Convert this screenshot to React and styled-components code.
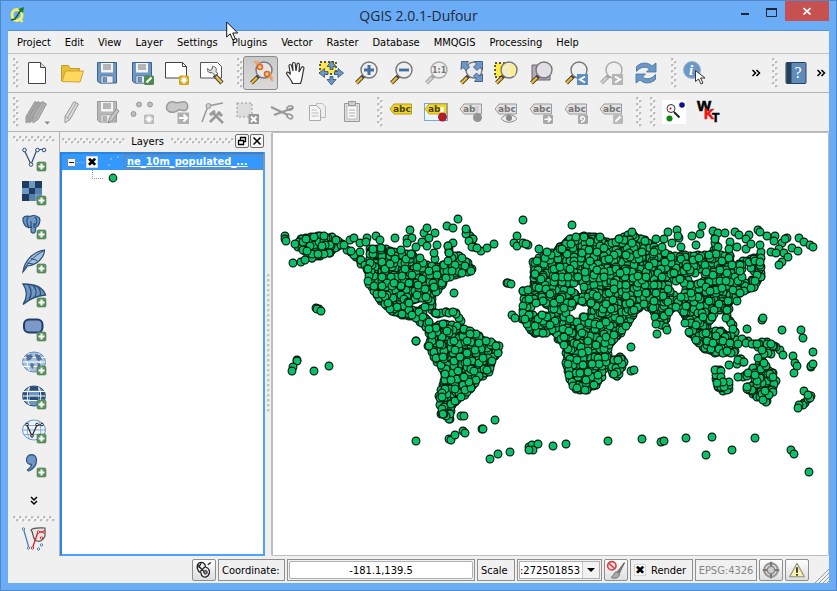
import React from "react";
import styled, { createGlobalStyle, css } from "styled-components";

const ui = '"DejaVu Sans Condensed", "DejaVu Sans", sans-serif';

const GlobalStyle = createGlobalStyle`
  * { box-sizing: border-box; }
  body { margin: 0; background: #6bacf7; font-family: ${ui}; font-size: 11px; color: #000; }
  button, input, select { font: inherit; color: inherit; }
`;

const Window = styled.div`
  display: flex;
  flex-direction: column;
  height: 100vh;
  min-height: 560px;
  padding: 0 7px 7px;
  background: #6bacf7;
  border: 1px solid #4f88c4;
  position: relative;
`;

const TitleBar = styled.header`
  display: grid;
  grid-template-columns: 98px 1fr 98px;
  align-items: start;
  height: 29px;
`;
const AppIcon = styled.span`
  padding: 5px 0 0 2px;
  line-height: 0;
`;
const Title = styled.h1`
  margin: 0;
  text-align: center;
  font: 400 14px/29px "Open Sans", "Noto Sans", sans-serif;
  color: #222a33;
`;
const Controls = styled.div`
  display: flex;
`;
const Control = styled.button`
  width: ${(p) => (p.$close ? 44 : 27)}px;
  height: ${(p) => (p.$close ? 20 : 22)}px;
  padding: 0;
  border: 0;
  display: grid;
  place-items: center;
  background: ${(p) => (p.$close ? "#c75050" : "transparent")};
`;

const Client = styled.div`
  flex: 1;
  min-height: 0;
  display: flex;
  flex-direction: column;
  background: #f0f0f0;
  border-top: 1px solid #5990d0;
`;
const MenuBar = styled.nav`
  display: flex;
  align-items: center;
  gap: 14px;
  height: 23px;
  padding: 2px 9px 0;
  border-bottom: 1px solid #c4c4c4;
`;
const MenuItem = styled.button`
  padding: 0;
  border: 0;
  background: none;
  line-height: 16px;
  white-space: nowrap;
`;

const ToolBar = styled.div`
  display: flex;
  align-items: center;
  height: 39px;
  padding-left: 5px;
  border-bottom: 1px solid #b4b4b4;
`;
const dots = css`
  background-image:
    radial-gradient(circle at 1px 1px, #bdbdbd 1px, transparent 2px),
    radial-gradient(circle at 1px 1px, #bdbdbd 1px, transparent 2px),
    radial-gradient(circle at 2px 2px, #ffffff 1px, transparent 2px),
    radial-gradient(circle at 2px 2px, #ffffff 1px, transparent 2px);
  background-size: 6px 6px;
  background-position: 0 0, 3px 3px, 0 0, 3px 3px;
`;
const Grip = styled.span`
  flex: none;
  width: 6px;
  height: 30px;
  margin-left: ${(p) => (p.$first ? 0 : 8)}px;
  ${dots}
`;
const FlatGrip = styled.span`
  ${dots}
  height: 6px;
  width: ${(p) => (p.$fill ? "auto" : "42px")};
  flex: ${(p) => (p.$fill ? 1 : "none")};
`;
const Tool = styled.button`
  flex: none;
  width: 35px;
  height: 34px;
  padding: 0;
  border: 1px solid ${(p) => (p.$active ? "#8b8b8b" : "transparent")};
  border-radius: 3px;
  background: ${(p) => (p.$active ? "linear-gradient(#c9c9c9, #dadada)" : "none")};
  display: grid;
  place-items: center;
`;
const More = styled.button`
  width: 16px;
  height: 30px;
  padding: 0;
  border: 0;
  background: none;
  display: grid;
  place-items: center;
  margin-left: ${(p) => (p.$push ? "auto" : 0)};
`;

const Workspace = styled.main`
  flex: 1;
  min-height: 0;
  display: grid;
  grid-template-columns: 52px 205px 6px 1fr;
`;
const SideBar = styled.div`
  display: flex;
  flex-direction: column;
  align-items: center;
  padding-top: 4px;
  border-right: 1px solid #b4b4b4;
  overflow: hidden;
  & > ${More} { margin: 4px 0 0; }
`;
const Dock = styled.section`
  display: flex;
  flex-direction: column;
  min-width: 0;
`;
const DockTitle = styled.div`
  display: flex;
  align-items: center;
  height: 20px;
  gap: 1px;
  padding: 0 1px 2px 2px;
`;
const DockName = styled.h2`
  margin: 0 6px 0 5px;
  font: inherit;
`;
const DockButton = styled.button`
  width: 14px;
  height: 14px;
  padding: 0;
  border: 1px solid #6c6c6c;
  border-radius: 2px;
  background: #f6f6f6;
  display: grid;
  place-items: center;
`;
const Tree = styled.div`
  flex: 1;
  background: #fff;
  border: 2px solid #4ba3fb;
  border-left-color: #2b84e2;
  border-top-color: #2b84e2;
`;
const LayerRow = styled.div`
  display: flex;
  align-items: center;
  height: 16px;
  padding-left: 5px;
  background: #3399ff;
`;
const Expander = styled.button`
  width: 9px;
  height: 9px;
  padding: 0;
  border: 1px solid #6b88a8;
  border-radius: 1px;
  background: #f5f5f5;
  display: grid;
  place-items: center;
  &::after { content: ""; width: 5px; height: 1px; background: #223; }
`;
const Branch = styled.span`
  width: 8px;
  margin-right: 2px;
  border-top: 1px dotted #8fb4dc;
`;
const Check = styled.input`
  appearance: none;
  flex: none;
  width: 12px;
  height: 12px;
  margin: 0;
  background: #fff;
  border: 1px solid #d8d8d8;
  display: grid;
  place-items: center;
  &:checked::after { content: "✖"; font: 12px/10px "DejaVu Sans", sans-serif; color: #000; }
`;
const LayerName = styled.label`
  flex: 1;
  padding-left: 2px;
  border: 1px dotted #c96a1a;
  font-weight: 700;
  line-height: 14px;
  text-decoration: underline;
  color: #fff;
  white-space: nowrap;
`;
const SymbolRow = styled.div`
  display: flex;
  height: 18px;
  padding-left: 30px;
`;
const Elbow = styled.span`
  width: 11px;
  height: 9px;
  margin-right: 5px;
  border-left: 1px dotted #999;
  border-bottom: 1px dotted #999;
`;
const Splitter = styled.div`
  display: grid;
  place-items: center;
  &::after {
    content: "";
    width: 3px;
    height: 140px;
    background: radial-gradient(circle at 1px 1px, #c2c2c2 1px, transparent 2px) 0 0 / 5px 5px;
  }
`;
const MapCanvas = styled.div`
  background: #fff;
  border: 2px solid #bdbdbd;
  border-width: 1px 1px 1px 2px;
  border-radius: 2px;
  min-width: 0;
  min-height: 0;
  svg { display: block; width: 100%; height: 100%; }
`;

const StatusBar = styled.footer`
  display: flex;
  justify-content: flex-end;
  align-items: center;
  gap: 2px;
  height: 27px;
  padding: 1px 0 0;
`;
const Cell = styled.div`
  display: flex;
  align-items: center;
  flex: none;
  width: ${(p) => p.$w}px;
  height: 22px;
  padding: 0 ${(p) => (p.$flush ? 1 : 3)}px;
  gap: 5px;
  border: 1px solid #8f8f8f;
  white-space: nowrap;
`;
const IconCell = styled.button`
  width: 24px;
  height: 22px;
  padding: 0;
  background: linear-gradient(#fdfdfd, #dedede);
  border: 1px solid #8f8f8f;
  border-radius: 2px;
  display: grid;
  place-items: center;
`;
const CoordInput = styled.input`
  width: 100%;
  height: 18px;
  padding: 0;
  border: 1px solid #b0b0b0;
  border-radius: 2px;
  background: #fff;
  text-align: center;
`;
const ScaleWrap = styled.div`
  display: grid;
  grid-template-columns: 1fr 17px;
  align-items: center;
  width: 100%;
  height: 18px;
  background: #fff;
  border: 1px solid #b0b0b0;
`;
const ScaleSelect = styled.select`
  grid-area: 1 / 1 / 2 / 3;
  appearance: none;
  width: 100%;
  height: 16px;
  padding: 0;
  border: 0;
  background: none;
`;
const ScaleArrow = styled.span`
  grid-area: 1 / 2;
  height: 16px;
  display: grid;
  place-items: center;
  background: #f2f2f2;
  border-left: 1px solid #c8c8c8;
  pointer-events: none;
`;
const Crs = styled.button`
  width: 62px;
  height: 22px;
  padding: 0;
  border: 1px solid #8f8f8f;
  background: none;
  color: #858585;
`;
const SizeGrip = styled.span`
  align-self: end;
  margin-left: 3px;
  line-height: 0;
`;
const Pointer = styled.span`
  position: absolute;
  left: 225px;
  top: 20px;
  line-height: 0;
  pointer-events: none;
`;

/* ---------- icons ---------- */
const Icon = ({ s = 24, children }) => (
  <svg width={s} height={s} viewBox="0 0 24 24" fill="none" overflow="visible" aria-hidden="true">{children}</svg>
);
const B = "#6d97c4";
const D = "#2c4e74";

const Floppy = ({ c = B, e = "#3d628c" }) => (
  <>
    <path d="M2.500 1.500h19v20.500h-17l-2-2z" fill={c} stroke={e} />
    <path d="M6 2h12v9.500H6z" fill="#f4f4f4" />
    <path d="M8 4h8M8 6h8M8 8h8" stroke="#777" />
    <path d="M6 15h12v7H6z" fill="#ececec" stroke={e} strokeWidth=".6" />
    <path d="M8 16.500h3.500V21H8z" fill={c} stroke={e} strokeWidth=".6" />
  </>
);
const Badge = ({ c, children }) => (
  <g><rect x="14" y="14.500" width="10" height="9.500" rx="1.500" fill={c} />{children}</g>
);
const Plus = () => (
  <g><rect x="15" y="15" width="9" height="9" rx="1.500" fill="#5e9360" stroke="#407544" strokeWidth=".6" /><path d="M19.500 16.500v6M16.500 19.500h6" stroke="#fff" strokeWidth="2" /></g>
);
const Star = () => (
  <path d="M19 15.500v7.500M15.300 19.200h7.400M16.500 16.700l5 5M21.500 16.700l-5 5" stroke="#fff" strokeWidth="1.200" />
);
const Lens = ({ grey, fill = "#efefef", children }) => (
  <>
    <path d="M10 14.500l-7.500 7.500" stroke={grey ? "#a3a3a3" : "#3c3c3c"} strokeWidth="4" />
    <path d="M8 16.500l-5.500 5.500" stroke={grey ? "#cfcfcf" : "#f0b92c"} strokeWidth="2.400" />
    <circle cx="15" cy="9" r="8" fill={fill} stroke={grey ? "#aaa" : "#777"} strokeWidth="1.400" />
    {children}
  </>
);
const Pencil = ({ x = 0, c = "#dcdcdc" }) => (
  <g transform={`translate(${x} 0)`}>
    <path d="M5 16.500L14 1.500l4.500 2.500L10 19.500l-5 3.500z" fill={c} stroke="#979797" />
    <path d="M7.500 18L16 3M5 16.500l5 3" stroke="#a0a0a0" />
  </g>
);
const Tag = ({ c = "#b9b9b9", e = "#9b9b9b", t = "#747474", label = "abc" }) => (
  <g>
    <path d="M1 9l4-5h17.500v10H5z" fill={c} stroke={e} />
    <text x="4" y="12" fontFamily="DejaVu Sans, sans-serif" fontWeight="700" fontSize="9" fill={t}>{label}</text>
  </g>
);
const greyTag = { c: "#e2e2e2" };

const NewDoc = <Icon><path d="M3.500 1.500h12l5 5v16h-17z" fill="#fff" stroke="#444" /><path d="M15.500 1.500v5h5" fill="#ddd" stroke="#444" /></Icon>;
const Open = <Icon><path d="M1.500 20V4.500h7l1.500 3h9.500V11" fill="#e9bd3a" stroke="#c79c23" /><path d="M2 20.500L5.500 10h18l-3.500 11z" fill="#ffd95d" stroke="#cfa42f" /></Icon>;
const Save = <Icon><Floppy /></Icon>;
const SaveAs = <Icon><Floppy /><Badge c="#4e8b52"><path d="M16.500 21.500l5-5" stroke="#fff" strokeWidth="2.200" /></Badge></Icon>;
const NewComposer = <Icon><path d="M.5 1.500h17l4 4v11.500h-21z" fill="#fff" stroke="#444" /><path d="M17.500 1.500v4h4" stroke="#444" /><Badge c="#d2a514"><Star /></Badge></Icon>;
const Manager = <Icon><path d="M.5 1.500h17l4 4v11.500h-21z" fill="#fff" stroke="#555" /><path d="M14.500 14l7.500 8" stroke="#444" strokeWidth="4.500" /><path d="M16 15.500l5.500 6" stroke="#e9c24b" strokeWidth="2.500" /><path d="M15 14.500l-3-3c-3 1-5-1-4.500-4l2.500 2 2-1 .5-3c3-.5 4.500 2 3.500 5l2 2.500z" fill="#e5e5e5" stroke="#555" /></Icon>;
const Touch = <Icon><Lens fill="#e6e6e6"><path d="M5 0l5 5M8 0l3 4M18 13l5.500 7M20 11l3.500 7" stroke="#e99c66" strokeWidth="1.600" /><circle cx="11" cy="6" r="2.500" fill="#f6c9a4" stroke="#e0681c" strokeWidth="1.600" /><circle cx="18" cy="13" r="2.500" fill="#f6c9a4" stroke="#e0681c" strokeWidth="1.600" /></Lens></Icon>;
const Hand = <Icon><path d="M8.500 22.500c-1-4-4-6-6-10 0-2 2-2 4 1L5 5c0-2 2.300-2 2.700 0l1.300 5-.5-7c0-2 2.500-2 2.800 0L12 10l1-6.500c.3-2 2.700-1.500 2.500.5L15 11l2.500-4.500c1-1.500 3-.5 2.300 1.500-1.500 5-1.300 10-3.300 14.500z" fill="#fff" stroke="#333" strokeWidth="1.200" /></Icon>;
const PanSel = <Icon><path d="M1 1h16v12H1z" fill="#ffe74c" stroke="#222" strokeWidth="1.400" strokeDasharray="2 2" /><path d="M12.500 0l4.500 5.500h-3v3h-3v-3H8zM12.500 24l4.500-5.500h-3v-3h-3v3H8zM0 12l5.500-4.500v3H9v3H5.500v3zM24.500 12L19 7.500v3h-3.500v3H19v3z" fill={B} stroke={D} strokeWidth=".8" /></Icon>;
const ZoomIn = <Icon><Lens><path d="M15 4v10M10 9h10" stroke="#416f9e" strokeWidth="3" /></Lens></Icon>;
const ZoomOut = <Icon><Lens><path d="M10 9h10" stroke="#416f9e" strokeWidth="2.800" /></Lens></Icon>;
const ZoomActual = <Icon><Lens grey><text x="8" y="12" fontFamily="DejaVu Sans, sans-serif" fontWeight="700" fontSize="8" fill="#777">1:1</text></Lens></Icon>;
const ZoomFull = <Icon><Lens fill="#e8e8e8"><path d="M2.500.5h7L7.500 3l3 3L7 9.500l-3-3-2 2zM23.500.5v8l-2.500-2-3 3L14.500 6l3-3-2-2.500zM23.500 20.500h-8l2-2.500-3-3 3-3 3 3 3-2z" fill={B} stroke={D} strokeWidth=".8" /></Lens></Icon>;
const ZoomSel = <Icon><path d="M1 2h16v14H1z" fill="#ffeb3f" stroke="#222" strokeDasharray="2 2" strokeWidth="1.400" /><Lens fill="#f2edc4"><path d="M16 3v12h5V5z" fill="#fff07f" opacity=".7" /></Lens></Icon>;
const ZoomLayer = <Icon><path d="M3 4h18v15H3z" fill="#b7a9bd" stroke="#6a6270" /><Lens fill="#e2dfe4" /></Icon>;
const ZoomLast = <Icon><Lens /><rect x="13" y="13" width="11" height="11" fill="#5d8fc2" /><path d="M21 15.500l-5 3 5 3" stroke="#fff" strokeWidth="2" /></Icon>;
const ZoomNext = <Icon><Lens grey /><rect x="13" y="13" width="11" height="11" fill="#b5b5b5" /><path d="M16 15.500l5 3-5 3" stroke="#fff" strokeWidth="2" /></Icon>;
const Refresh = <Icon><path d="M2.500 10.500V5.500C7 1 14 1 18 5l4-3v9h-9.500l3-3C12 5 6 6 2.500 10.500zM21.500 13.500v5C17 23 10 23 6 19l-4 3v-9h9.500l-3 3c3.500 3 9.500 2 13-2.500z" fill={B} stroke="#40709f" strokeWidth=".8" /></Icon>;
const Identify = <Icon><circle cx="9" cy="9" r="8.500" fill={B} stroke="#9ab6d2" /><text x="6" y="14" fontFamily="Liberation Serif, serif" fontStyle="italic" fontWeight="700" fontSize="15" fill="#fff">i</text><path d="M12.500 9.500v11l3-2.500 2.500 5 2-1-2.500-5h4.500z" fill="#fff" stroke="#333" /></Icon>;
const Help = <Icon><rect x="2" y="1.500" width="20" height="21" rx="1" fill="#5e8bbb" stroke="#29435f" /><path d="M2.500 2h5v20h-5z" fill="#283f57" /><text x="10.500" y="17" fontFamily="Liberation Serif, serif" fontSize="16" fill="#fff">?</text></Icon>;

const Edits = <Icon><Pencil x={-4} c="#a8a8a8" /><Pencil x={-1} c="#a8a8a8" /><Pencil x={3} c="#b4b4b4" /><path d="M19.500 21.500h5.500l-2.700 3z" fill="#888" /></Icon>;
const EditOne = <Icon><Pencil /></Icon>;
const SaveEdits = <Icon><Floppy c="#b7b7b7" e="#999" /><path d="M13 23l1.500-5 7-9 2.500 2-6.500 9.500z" fill="#c6c6c6" stroke="#8f8f8f" /></Icon>;
const AddFeature = <Icon><g fill="#bcbcbc" stroke="#999"><circle cx="9" cy="4.500" r="2.500" /><circle cx="20" cy="4.500" r="2.500" /><circle cx="3.500" cy="14" r="2.500" /></g><Badge c="#bababa"><Star /></Badge></Icon>;
const MoveFeature = <Icon><path d="M1.500 8c0-4 3-7 7-6 3 1 5 1 8 0 5-1 7 2 6 6-1 3-4 3-6 2-3-1-4 1-7 2-4 1-8-1-8-4z" fill="#c8c8c8" stroke="#999" strokeWidth="1.500" /><rect x="12.500" y="12.500" width="11.500" height="11.500" fill="#b0b0b0" /><path d="M14 18h8M18.500 14.500l3.500 3.500-3.500 3.500" stroke="#fff" strokeWidth="2" /></Icon>;
const NodeTool = <Icon><path d="M2 22L8 6l15-3" stroke="#999" strokeWidth="1.500" /><circle cx="8.500" cy="6" r="2.500" fill="#ccc" stroke="#999" /><path d="M13 13l10 10M20 12L10 22" stroke="#999" strokeWidth="2.500" /><path d="M10 15l5-4M18 12l4 4" stroke="#999" strokeWidth="3" /></Icon>;
const DeleteSel = <Icon><path d="M2 3h15v14H2z" fill="#ddd" stroke="#999" strokeDasharray="2 2" /><rect x="13.500" y="14" width="10.500" height="10" fill="#999" /><path d="M16 16.500l5.500 5.500M21.500 16.500L16 22" stroke="#fff" strokeWidth="2" /></Icon>;
const Cut = <Icon><path d="M1 7l17 8M4 15L23 8" stroke="#999" strokeWidth="2" /><ellipse cx="20" cy="16.500" rx="3" ry="2" transform="rotate(30 20 16)" stroke="#999" strokeWidth="1.600" /><ellipse cx="20" cy="8" rx="3" ry="2" transform="rotate(-20 20 8)" stroke="#999" strokeWidth="1.600" /></Icon>;
const Copy = <Icon><path d="M11.500 3.500h6l3 3v11h-9z" fill="#eee" stroke="#bbb" /><path d="M4.500 5.500h7l4 4v11h-11z" fill="#f6f6f6" stroke="#aaa" /><path d="M6.500 10h5M6.500 13h7M6.500 16h7" stroke="#bbb" /></Icon>;
const Paste = <Icon><path d="M4.500 3.500h15v18h-15z" fill="#ddd" stroke="#999" /><path d="M7 6h10v13H7z" fill="#fafafa" stroke="#bbb" /><path d="M8.500 1.500h7v4h-7z" fill="#ccc" stroke="#999" /><path d="M9 10h6M9 13h6M9 16h6" stroke="#aaa" /></Icon>;
const Label = <Icon><Tag c="#f1d52d" e="#b59d12" t="#4a430b" /></Icon>;
const LabelPin = <Icon><rect x=".5" y="3.500" width="23" height="17" fill="#eef4fc" stroke="#7aa6d8" /><Tag c="#f1d52d" e="#c5ab18" t="#4a430b" label="ab" /><path d="M18 7v9" stroke="#fff" strokeWidth="3" /><circle cx="18.500" cy="17" r="4.500" fill="#b01f24" /></Icon>;
const LabelPinGrey = <Icon><Tag {...greyTag} label="ab" /><path d="M18 6v9" stroke="#ccc" strokeWidth="3" /><circle cx="18.500" cy="17.500" r="4.500" fill="#929292" /></Icon>;
const LabelShow = <Icon><Tag {...greyTag} /><path d="M7 18.500c4-5 12-5 16 0-4 5-12 5-16 0z" fill="#eee" stroke="#888" /><circle cx="15" cy="18" r="3" fill="#888" /></Icon>;
const LabelMove = <Icon><Tag {...greyTag} /><Badge c="#a9a9a9"><path d="M15.500 19.200h6M19 16.500l2.700 2.700-2.700 2.700" stroke="#fff" strokeWidth="1.600" /></Badge></Icon>;
const LabelTurn = <Icon><Tag {...greyTag} /><Badge c="#a9a9a9"><path d="M17 22c4 0 5-5 1.500-5.500-3 .5-2 3.500 0 3" stroke="#fff" strokeWidth="1.400" /></Badge></Icon>;
const LabelEdit = <Icon><Tag {...greyTag} /><Badge c="#b9b9b9"><path d="M16.500 21.500l5-5" stroke="#fff" strokeWidth="2" /></Badge></Icon>;
const Finder = <Icon><path d="M0 0h24v24H0z" fill="#fff" /><circle cx="9" cy="8.500" r="4" fill="#f7f7f7" stroke="#333" /><path d="M12 12l5.500 5.500" stroke="#222" strokeWidth="2" /><circle cx="8.500" cy="8.500" r="1" fill="#d00" /><circle cx="20" cy="5" r="2.800" fill="#10108c" /><circle cx="7.500" cy="18.500" r="3" fill="#0c860c" /></Icon>;
const Wkt = <Icon><g fontFamily="Liberation Sans, sans-serif" fontWeight="700" strokeWidth=".6"><text x="0" y="11" fontSize="15" fill="#000" stroke="#000">W</text><text x="7" y="19" fontSize="14" fill="#e11" stroke="#e11">K</text><text x="15" y="22" fontSize="12" fill="#000" stroke="#000">T</text></g></Icon>;

const Globe = ({ land, light }) => (
  <>
    <ellipse cx="12" cy="11" rx="11.500" ry="10" fill={light ? "#f0f4f9" : land ? "#a9c1dc" : B} stroke={light ? "#6a98cb" : land ? "#5f8abd" : D} />
    {!light && !land && <path d="M1 7.500h6V14H2zM8 1.500h8v4H8zM8 11h8v5H8zM17 7h5.500v7H17z" fill={D} />}
    <path d="M1 6.500h22M1 15.500h22M.5 11h23M7.500 2c-3 6-3 12 0 18M16.500 2c3 6 3 12 0 18" stroke={light ? "#80a9d4" : "#fff"} />
  </>
);
const AddVector = <Icon><path d="M2.500 3.500L9 17.500l6-15h6" stroke={D} strokeWidth="1.200" /><g fill="#e9eff6" stroke={D}><circle cx="2.500" cy="3" r="1.800" /><circle cx="9" cy="17.500" r="1.800" /><circle cx="15.500" cy="3" r="1.800" /><circle cx="22" cy="3" r="1.800" /></g><Plus /></Icon>;
const AddRaster = <Icon><path d="M0 0h20v20H0z" fill={B} /><path d="M0 0h7v7H0zM13 0h7v7h-7zM7 7h6v6H7zM0 13h7v7H0z" fill="#203b5d" /><path d="M7 13h6v7H7zM13 7h7v6h-7z" fill="#557fae" /><Plus /></Icon>;
const AddPostgis = <Icon><path d="M1 3c2-3 5-2 7-1.500 3-1.500 6-1 8 .5 3 1 2 6 0 9l-2 1-1 5c-1 2-4 1-4-1v-4c-2 1-3 1-3.500 0C3 12 2 9 1 6z" fill={B} stroke={D} strokeWidth="1.200" /><path d="M6 2c-2 3-1 7 .5 10M13 2c3 3 2 7-1 9M9 6v7M12 8v5" stroke={D} strokeWidth="1.200" /><Plus /></Icon>;
const AddSpatialite = <Icon><path d="M1 23C2 14 9 3 22.500 1c0 7-7 15-17 16z" fill="#a4c1df" stroke={D} strokeWidth="1.200" /><path d="M1 23C4 15 12 7 22 1.500M9 9.500l6 2M5 14l6 1" stroke={D} /><Plus /></Icon>;
const AddMssql = <Icon><path d="M1 1c11 0 20 3 22.500 11C12 13 6 17 1 21.500 6 14 5 7 1 1z" fill={B} stroke={D} strokeWidth="1.300" /><path d="M6 1c4 6 4 11 1 15M11 2c4 5 4 8 2 12M16 4c3 4 3 6 2 9" stroke={D} strokeWidth="1.300" /><Plus /></Icon>;
const AddOracle = <Icon><rect x="2" y="2.500" width="18.500" height="13" rx="5" fill="#7b9aca" stroke="#1f3d66" strokeWidth="2" /><Plus /></Icon>;
const AddWms = <Icon><Globe land /><path d="M4 4.500l5-1.500 2 3-3 3-3 1zM13 3l5 1 2 5-4 1-2-3zM9 12l3 1-1 5-3-3zM15 12l4 1-2 4z" fill="#40628b" opacity=".85" /><Plus /></Icon>;
const AddWcs = <Icon><Globe /><Plus /></Icon>;
const AddWfs = <Icon><Globe light /><path d="M5 6l5 11 5-11h5" stroke="#222" strokeWidth="1.200" /><g fill="#fff" stroke="#222"><circle cx="5" cy="5.500" r="1.300" /><circle cx="10" cy="17" r="1.300" /><circle cx="15" cy="5.500" r="1.300" /><circle cx="20" cy="5.500" r="1.300" /></g><Plus /></Icon>;
const AddCsv = <Icon><path d="M4.500 7c0-7 10-7 10 0 0 5-3 9-8 11l-1-1c3-2 4-3 4-5.500-3 0-5-2-5-4.500z" fill={B} stroke="#315980" strokeWidth="1.300" /><Plus /></Icon>;
const Topology = <Icon><path d="M1.500 2L7 21" stroke="#4a7bb1" strokeWidth="1.200" /><path d="M9 3c3-3 9-2 14-2v8c-2 4-5 6-8 5-5-1-3-8-6-11z" fill="#e6e6e6" stroke="#555" strokeWidth="1.200" /><path d="M10.500 21L16 5h6" stroke="#d8232a" strokeWidth="1.300" /><g fill="#fff" stroke="#d8232a"><circle cx="10.500" cy="21" r="1.200" /><circle cx="16.500" cy="5" r="1.200" /><circle cx="22" cy="5" r="1.200" /><circle cx="19.500" cy="11" r="1.200" /></g><g fill="#fff" stroke="#4a7bb1"><circle cx="1.500" cy="2" r="1.200" /><circle cx="6.500" cy="21" r="1.200" /><circle cx="19.500" cy="18" r="1.200" /><circle cx="16.500" cy="22" r="1.200" /></g></Icon>;

const Chevrons = ({ down }) => (
  <svg width="10" height="10" viewBox="0 0 10 10" fill="none" stroke="#000" strokeWidth="1.500" aria-hidden="true">
    <path d={down ? "M2 1l3 3 3-3M2 5l3 3 3-3" : "M1.500 2l3 3-3 3M5.500 2l3 3-3 3"} />
  </svg>
);

/* ---------- world map of populated places ---------- */
const VIEW = { x: 274, y: 132, w: 555, h: 422 };
const REGIONS = [
  [[369,267],[370,283],[380,297],[393,310],[403,313],[417,317],[427,326],[430,322],[420,311],[409,308],[410,301],[424,296],[432,298],[443,283],[444,277],[460,273],[473,269],[466,260],[459,255],[452,257],[445,264],[437,267],[424,263],[412,254],[402,252],[382,248],[372,249],[372,258]],
  [[297,243],[303,238],[320,235],[337,238],[342,243],[330,252],[313,257],[305,249]],
  [[432,335],[430,329],[437,326],[445,322],[457,325],[470,330],[477,334],[487,340],[499,345],[499,351],[492,360],[490,370],[477,378],[472,388],[462,396],[452,403],[451,417],[442,412],[441,396],[445,380],[445,370],[437,358],[430,345]],
  [[535,262],[540,257],[557,252],[561,247],[572,238],[585,235],[600,237],[610,244],[620,238],[633,234],[645,239],[658,248],[673,256],[687,255],[713,254],[730,254],[740,261],[756,258],[761,265],[761,276],[755,286],[748,288],[741,292],[730,300],[729,308],[717,308],[713,317],[707,324],[697,329],[690,320],[685,310],[680,304],[673,308],[667,317],[663,324],[657,316],[653,307],[645,303],[636,308],[600,310],[562,304],[540,300],[527,306],[525,291],[537,286],[535,277],[536,270]],
  [[524,306],[523,317],[530,325],[535,332],[543,332],[555,330],[560,337],[568,348],[568,362],[571,378],[577,388],[587,388],[597,383],[603,375],[607,360],[610,344],[618,335],[627,325],[633,315],[639,306],[600,298],[560,302]],
  [[612,359],[622,357],[624,362],[618,375],[614,373]],
  [[690,331],[697,330],[707,333],[722,330],[730,338],[735,351],[727,352],[717,351],[707,348],[698,339]],
  [[755,368],[764,362],[773,372],[777,380],[773,390],[767,400],[757,395],[747,387],[757,382]],
];
const HOLES = [[583,307,9,6],[541,308,8,6],[575,313,7,5],[678,287,8,7],[697,277,6,5],[739,257,7,5],[748,272,7,5],[679,245,7,6],[577,286,5,4]];
const CHAINS = [
  [[342,243],[352,250],[361,260],[369,267]],
  [[433,300],[432,305],[437,312],[447,312],[458,313],[463,320]],
  [[421,309],[428,322],[433,333]],
  [[422,309],[433,303]],
  [[466,229],[468,232],[475,237],[471,240],[474,245],[482,249]],
  [[449,245],[451,252],[460,256]],
  [[727,305],[728,317],[733,323],[735,330],[730,337]],
  [[738,338],[748,341],[757,343],[767,342],[775,345],[785,353]],
  [[759,347],[766,352],[772,353]],
  [[723,369],[717,370],[717,377],[720,387],[724,390]],
  [[723,386],[729,388],[730,380]],
  [[739,377],[747,374],[755,367]],
  [[738,363],[742,357],[746,362]],
  [[806,390],[812,396],[804,403],[798,407]],
  [[712,252],[718,247],[716,238]],
  [[761,262],[761,250]],
  [[463,430],[467,432]],
];
const PLACES = "286,235 286,238 287,240 294,262 302,261 306,259 351,239 355,237 361,242 352,250 361,251 368,237 367,241 377,235 381,239 396,237 411,229 408,238 413,237 408,242 417,246 402,249 412,253 425,232 428,227 436,232 430,237 423,241 428,245 438,244 436,258 435,252 448,225 454,227 459,218 454,242 449,245 450,252 421,257 382,247 392,251 488,247 495,243 455,292 508,282 509,282 512,283 513,314 516,317 317,307 320,308 318,308 322,310 417,340 417,340 462,415 465,415 496,419 483,428 484,428 417,440 450,438 452,439 456,434 491,458 499,453 511,451 530,446 533,444 539,443 534,449 530,449 554,445 298,359 298,360 294,366 293,370 315,370 330,365 524,219 573,224 518,235 515,242 518,245 524,242 529,244 527,243 540,248 548,251 633,231 669,231 678,229 680,237 679,235 673,242 682,246 665,238 657,238 663,246 693,235 703,225 701,233 697,244 714,230 719,232 726,232 716,238 736,231 740,234 750,234 747,238 731,241 738,246 747,248 752,243 730,248 759,229 761,231 768,235 776,235 761,244 783,242 775,240 788,237 786,238 793,247 799,250 800,237 805,241 811,244 814,246 780,248 772,251 785,252 789,256 783,261 780,264 777,252 632,346 632,370 635,369 658,333 657,323 667,326 668,329 686,322 739,343 794,355 796,362 798,365 795,372 814,351 812,366 812,365 814,363 804,337 802,329 783,329 763,319 764,317 748,328 738,300 759,357 730,364 722,376 724,381 718,382 567,443 609,440 643,438 662,441 665,440 687,437 713,436 756,437 733,449 707,454 792,449 795,453 810,471";

function inside([x, y], poly) {
  let hit = false;
  for (let i = 0, j = poly.length - 1; i < poly.length; j = i++) {
    const [xi, yi] = poly[i];
    const [xj, yj] = poly[j];
    if (yi > y !== yj > y && x < ((xj - xi) * (y - yi)) / (yj - yi) + xi) hit = !hit;
  }
  return hit;
}
function buildPlaces() {
  let seed = 7;
  const rnd = () => {
    seed = (seed * 16807) % 2147483647;
    return seed / 2147483647;
  };
  const open = ([x, y]) => HOLES.every(([hx, hy, rx, ry]) => ((x - hx) / rx) ** 2 + ((y - hy) / ry) ** 2 > 1);
  const pts = [];
  const walk = (line, step, spread) => {
    for (let i = 1; i < line.length; i++) {
      const [ax, ay] = line[i - 1];
      const [bx, by] = line[i];
      const n = Math.max(1, Math.round(Math.hypot(bx - ax, by - ay) / step));
      for (let k = 0; k <= n; k++) {
        pts.push([ax + ((bx - ax) * k) / n + (rnd() - 0.5) * spread, ay + ((by - ay) * k) / n + (rnd() - 0.5) * spread]);
      }
    }
  };
  REGIONS.forEach((poly) => {
    walk([...poly, poly[0]], 4, 2);
    const xs = poly.map((p) => p[0]);
    const ys = poly.map((p) => p[1]);
    for (let x = Math.min(...xs); x <= Math.max(...xs); x += 4) {
      for (let y = Math.min(...ys); y <= Math.max(...ys); y += 4) {
        const p = [x + (rnd() - 0.5) * 5, y + (rnd() - 0.5) * 5];
        if (inside(p, poly)) pts.push(p);
      }
    }
  });
  CHAINS.forEach((line) => walk(line, 4, 3));
  const shown = pts.filter(open);
  for (let i = shown.length - 1; i > 0; i--) {
    const j = Math.floor(rnd() * (i + 1));
    [shown[i], shown[j]] = [shown[j], shown[i]];
  }
  return [...shown.map(([x, y]) => [Math.round(x), Math.round(y)]), ...PLACES.split(" ").map((p) => p.split(",").map(Number))];
}
const places = buildPlaces();

const menus = ["Project", "Edit", "View", "Layer", "Settings", "Plugins", "Vector", "Raster", "Database", "MMQGIS", "Processing", "Help"];
const fileTools = [["New", NewDoc], ["Open", Open], ["Save", Save], ["Save As", SaveAs], ["New Print Composer", NewComposer], ["Composer Manager", Manager]];
const navTools = [["Touch zoom and pan", Touch], ["Pan Map", Hand], ["Pan Map to Selection", PanSel], ["Zoom In", ZoomIn], ["Zoom Out", ZoomOut], ["Zoom to Native Resolution", ZoomActual], ["Zoom Full", ZoomFull], ["Zoom to Selection", ZoomSel], ["Zoom to Layer", ZoomLayer], ["Zoom Last", ZoomLast], ["Zoom Next", ZoomNext], ["Refresh", Refresh]];
const editTools = [["Current Edits", Edits], ["Toggle Editing", EditOne], ["Save Layer Edits", SaveEdits], ["Add Feature", AddFeature], ["Move Feature", MoveFeature], ["Node Tool", NodeTool], ["Delete Selected", DeleteSel], ["Cut Features", Cut], ["Copy Features", Copy], ["Paste Features", Paste]];
const labelTools = [["Labeling", Label], ["Highlight Pinned Labels", LabelPin], ["Pin Labels", LabelPinGrey], ["Show Labels", LabelShow], ["Move Label", LabelMove], ["Rotate Label", LabelTurn], ["Change Label", LabelEdit]];
const layerTools = [["Add Vector Layer", AddVector], ["Add Raster Layer", AddRaster], ["Add PostGIS Layer", AddPostgis], ["Add SpatiaLite Layer", AddSpatialite], ["Add MSSQL Layer", AddMssql], ["Add Oracle Layer", AddOracle], ["Add WMS Layer", AddWms], ["Add WCS Layer", AddWcs], ["Add WFS Layer", AddWfs], ["Add Delimited Text Layer", AddCsv]];

const Tools = ({ items, active }) =>
  items.map(([name, icon]) => (
    <Tool key={name} aria-label={name} title={name} $active={name === active}>{icon}</Tool>
  ));

export default function App() {
  return (
    <Window>
      <GlobalStyle />
      <TitleBar>
        <AppIcon>
          <svg width="16" height="17" viewBox="0 0 16 17" fill="none" aria-hidden="true">
            <ellipse cx="7" cy="9" rx="5" ry="5.500" stroke="#eef06a" strokeWidth="3" />
            <path d="M9 12l3.500 4" stroke="#eef06a" strokeWidth="2.500" />
            <path d="M1 14l4-1 6-9" stroke="#1d5c1d" strokeWidth="1.500" />
            <path d="M8 3l6-2-1 6z" fill="#1d7a2a" />
          </svg>
        </AppIcon>
        <Title>QGIS 2.0.1-Dufour</Title>
        <Controls>
          <Control aria-label="Minimize"><svg width="8" height="10" aria-hidden="true"><path d="M0 6h8v2H0z" fill="#1c2733" /></svg></Control>
          <Control aria-label="Maximize"><svg width="11" height="9" fill="none" aria-hidden="true"><path d="M.5 1h10v7.500H.5z" stroke="#1c2733" /><path d="M0 1h11" stroke="#1c2733" strokeWidth="2" /></svg></Control>
          <Control $close aria-label="Close"><svg width="8" height="8" aria-hidden="true"><path d="M.5 1l7 6.500M7.500 1l-7 6.500" stroke="#fff" strokeWidth="1.700" /></svg></Control>
        </Controls>
      </TitleBar>

      <Client>
        <MenuBar>{menus.map((m) => <MenuItem key={m}>{m}</MenuItem>)}</MenuBar>
        <ToolBar>
          <Grip $first />
          <Tools items={fileTools} />
          <Grip />
          <Tools items={navTools} active="Touch zoom and pan" />
          <Grip />
          <Tools items={[["Identify Features", Identify]]} />
          <More $push aria-label="More tools"><Chevrons /></More>
          <Grip />
          <Tools items={[["Help Contents", Help]]} />
          <More aria-label="More help"><Chevrons /></More>
        </ToolBar>
        <ToolBar>
          <Grip $first />
          <Tools items={editTools} />
          <Grip />
          <Tools items={labelTools} />
          <Grip />
          <Grip />
          <Tools items={[["Finder", Finder], ["WKT", Wkt]]} />
        </ToolBar>

        <Workspace>
          <SideBar>
            <FlatGrip />
            <Tools items={layerTools} />
            <More aria-label="More layers"><Chevrons down /></More>
            <FlatGrip />
            <Tools items={[["Topology Checker", Topology]]} />
          </SideBar>
          <Dock>
            <DockTitle>
              <FlatGrip $fill />
              <DockName>Layers</DockName>
              <FlatGrip $fill />
              <DockButton aria-label="Float panel"><svg width="10" height="10" fill="none" stroke="#000" aria-hidden="true"><path d="M3.500 4V1.500h5v4H7M1.500 4.500h5v4h-5z" strokeWidth="1.300" /></svg></DockButton>
              <DockButton aria-label="Close panel"><svg width="8" height="8" aria-hidden="true"><path d="M.5.5l7 7M7.500.5l-7 7" stroke="#000" strokeWidth="1.500" /></svg></DockButton>
            </DockTitle>
            <Tree>
              <LayerRow>
                <Expander aria-label="Collapse layer" />
                <Branch />
                <Check type="checkbox" id="layer" defaultChecked />
                <svg width="26" height="16" fill="#9cb6cf" aria-hidden="true"><circle cx="11" cy="11" r="1" /><circle cx="13" cy="5" r="1" /><circle cx="20" cy="3" r="1" /></svg>
                <LayerName htmlFor="layer">ne_10m_populated_...</LayerName>
              </LayerRow>
              <SymbolRow>
                <Elbow />
                <svg width="10" height="17" aria-hidden="true"><circle cx="5" cy="8" r="3.800" fill="#0bc06a" stroke="#0c2a1b" strokeWidth="1.200" /></svg>
              </SymbolRow>
            </Tree>
          </Dock>
          <Splitter />
          <MapCanvas>
            <svg viewBox={`${VIEW.x} ${VIEW.y} ${VIEW.w} ${VIEW.h}`} role="img" aria-label="World map of populated places">
              <g fill="#0bc06a" stroke="#00150b" strokeWidth="1.100">
                {places.map(([x, y], i) => <circle key={i} cx={x} cy={y} r="3.900" />)}
              </g>
            </svg>
          </MapCanvas>
        </Workspace>

        <StatusBar>
          <IconCell aria-label="Toggle extents"><Icon s={18}><path d="M5 3c4-3 9 0 9 5 6 2 7 8 3 12-4 3-9 1-9-4-5-2-7-9-3-13zM4 6l8 8M8 3l-3 6M13 8l-6 6M17 5l4-3" stroke="#222" strokeWidth="1.700" /><circle cx="14" cy="15" r="2.500" fill="#777" stroke="#222" /></Icon></IconCell>
          <Cell as="label" htmlFor="coord" $w={67}>Coordinate:</Cell>
          <Cell $w={188} $flush><CoordInput id="coord" defaultValue="-181.1,139.5" /></Cell>
          <Cell as="label" htmlFor="scale" $w={38}>Scale</Cell>
          <Cell $w={85} $flush>
            <ScaleWrap>
              <ScaleSelect id="scale" defaultValue="s"><option value="s">:272501853</option></ScaleSelect>
              <ScaleArrow><svg width="8" height="4" aria-hidden="true"><path d="M0 0h8L4 4z" /></svg></ScaleArrow>
            </ScaleWrap>
          </Cell>
          <IconCell aria-label="Stop rendering"><Icon s={20}><path d="M22 3l-9 12 3 1 6-12z" fill="#888" stroke="#555" /><path d="M13 14c-4 0-3 5-7 7 4 2 11 1 10-5z" fill="#aaa" stroke="#666" /><circle cx="7" cy="7" r="5" fill="#fbe4e4" stroke="#d4454b" strokeWidth="2" /><path d="M3.500 4l7 6.500" stroke="#d4454b" strokeWidth="2" /></Icon></IconCell>
          <Cell as="label" $w={63}><Check type="checkbox" defaultChecked />Render</Cell>
          <Crs>EPSG:4326</Crs>
          <IconCell aria-label="CRS status"><Icon s={18}><circle cx="12" cy="12" r="9" stroke="#999" strokeWidth="3" /><path d="M12 1v22M1 12h22" stroke="#777" strokeWidth="3" /><circle cx="12" cy="12" r="5" fill="#ccc" stroke="#888" strokeWidth="2" /></Icon></IconCell>
          <IconCell aria-label="Messages"><Icon s={16}><path d="M12 2l11 20H1z" fill="#f6f2b0" stroke="#8c8c7a" strokeWidth="1.600" strokeLinejoin="round" /><path d="M12 8v8M12 18v2.500" stroke="#222" strokeWidth="2.500" /></Icon></IconCell>
          <SizeGrip><svg width="15" height="14" stroke="#999" aria-hidden="true"><path d="M1 14L15 0M5 14L15 4M9 14l6-6M13 14l2-2" /></svg></SizeGrip>
        </StatusBar>
      </Client>
      <Pointer>
        <svg width="13" height="20" viewBox="0 0 13 20" aria-hidden="true"><path d="M.7 1v15l3.500-3.200L6.800 19l2.500-1L6.700 12h5z" fill="#fff" stroke="#111" /></svg>
      </Pointer>
    </Window>
  );
}
